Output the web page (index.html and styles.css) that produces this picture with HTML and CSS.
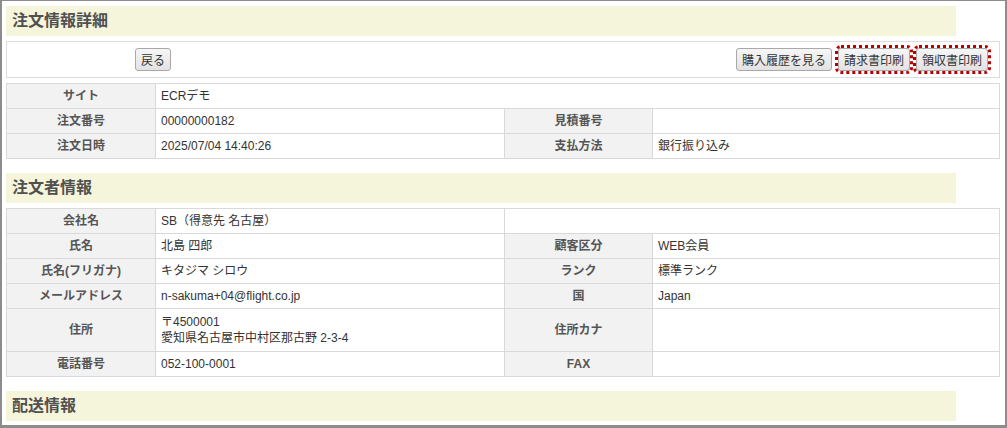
FILE: index.html
```html
<!DOCTYPE html>
<html lang="ja">
<head>
<meta charset="utf-8">
<title>注文情報詳細</title>
<link rel="stylesheet" href="styles.css">
</head>
<body>
<div class="frame">
  <h2 class="band">注文情報詳細</h2>
  <div class="toolbar">
    <div class="tb-left"><button class="btn">戻る</button></div>
    <div class="tb-right">
      <button class="btn">購入履歴を見る</button>
      <button class="btn focus">請求書印刷</button>
      <button class="btn focus">領収書印刷</button>
    </div>
  </div>
  <table class="info">
    <colgroup><col class="c-lbl"><col class="c-val"><col class="c-lbl2"><col></colgroup>
    <tr><th>サイト</th><td colspan="3">ECRデモ</td></tr>
    <tr><th>注文番号</th><td>00000000182</td><th>見積番号</th><td></td></tr>
    <tr><th>注文日時</th><td>2025/07/04 14:40:26</td><th>支払方法</th><td>銀行振り込み</td></tr>
  </table>

  <h2 class="band">注文者情報</h2>
  <table class="info">
    <colgroup><col class="c-lbl"><col class="c-val"><col class="c-lbl2"><col></colgroup>
    <tr><th>会社名</th><td>SB（得意先 名古屋）</td><td colspan="2"></td></tr>
    <tr><th>氏名</th><td>北島 四郎</td><th>顧客区分</th><td>WEB会員</td></tr>
    <tr><th>氏名(フリガナ)</th><td>キタジマ シロウ</td><th>ランク</th><td>標準ランク</td></tr>
    <tr><th>メールアドレス</th><td>n-sakuma+04@flight.co.jp</td><th>国</th><td>Japan</td></tr>
    <tr class="tall"><th>住所</th><td>〒4500001<br>愛知県名古屋市中村区那古野 2-3-4</td><th>住所カナ</th><td></td></tr>
    <tr><th>電話番号</th><td>052-100-0001</td><th>FAX</th><td></td></tr>
  </table>

  <h2 class="band">配送情報</h2>
</div>
</body>
</html>
```

FILE: styles.css
```css
html, body {
  margin: 0;
  padding: 0;
  background: #ffffff;
}
body {
  font-family: "Liberation Sans", "Noto Sans CJK JP", sans-serif;
  font-size: 12px;
  color: #333;
}
.frame {
  box-sizing: border-box;
  width: 1007px;
  height: 428px;
  overflow: hidden;
  border-style: solid;
  border-color: #8c8c8c;
  border-width: 1px 2px 3px 2px;
  padding: 5px 5px 0 4px;
}
.band {
  box-sizing: border-box;
  width: 950px;
  height: 30px;
  margin: 0 0 5px 0;
  padding: 0 0 0 6px;
  background: #f5f5dc;
  color: #505050;
  font-size: 16px;
  font-weight: bold;
  line-height: 30px;
}
.toolbar {
  box-sizing: border-box;
  height: 37px;
  border: 1px solid #dcdcdc;
  margin-bottom: 5px;
  display: flex;
  align-items: center;
  justify-content: space-between;
  padding: 0 11px 0 128px;
}
.tb-right {
  display: flex;
  gap: 6px;
}
.btn {
  box-sizing: border-box;
  height: 23px;
  padding: 0 5px;
  font-family: "Liberation Sans", "Noto Sans CJK JP", sans-serif;
  font-size: 12px;
  color: #333;
  background: linear-gradient(#f6f6f6, #e2e2e2);
  border: 1px solid #a9a9a9;
  border-radius: 3px;
}
.focus {
  outline: 3px dotted #b80000;
  outline-offset: 0;
}
.info {
  width: 994px;
  border-collapse: collapse;
  table-layout: fixed;
  margin-bottom: 14px;
}
.c-lbl { width: 149px; }
.c-val { width: 349px; }
.c-lbl2 { width: 148px; }
.info th, .info td {
  border: 1px solid #d9d9d9;
  padding: 4px 5px;
  line-height: 16px;
  height: 16px;
  font-size: 12px;
}
.info .tall th, .info .tall td {
  padding-top: 5px;
  padding-bottom: 5px;
}
.info th {
  background: #f2f2f2;
  color: #555;
  font-weight: bold;
  text-align: center;
}
.info td {
  background: #fff;
  color: #333;
  text-align: left;
}
```
